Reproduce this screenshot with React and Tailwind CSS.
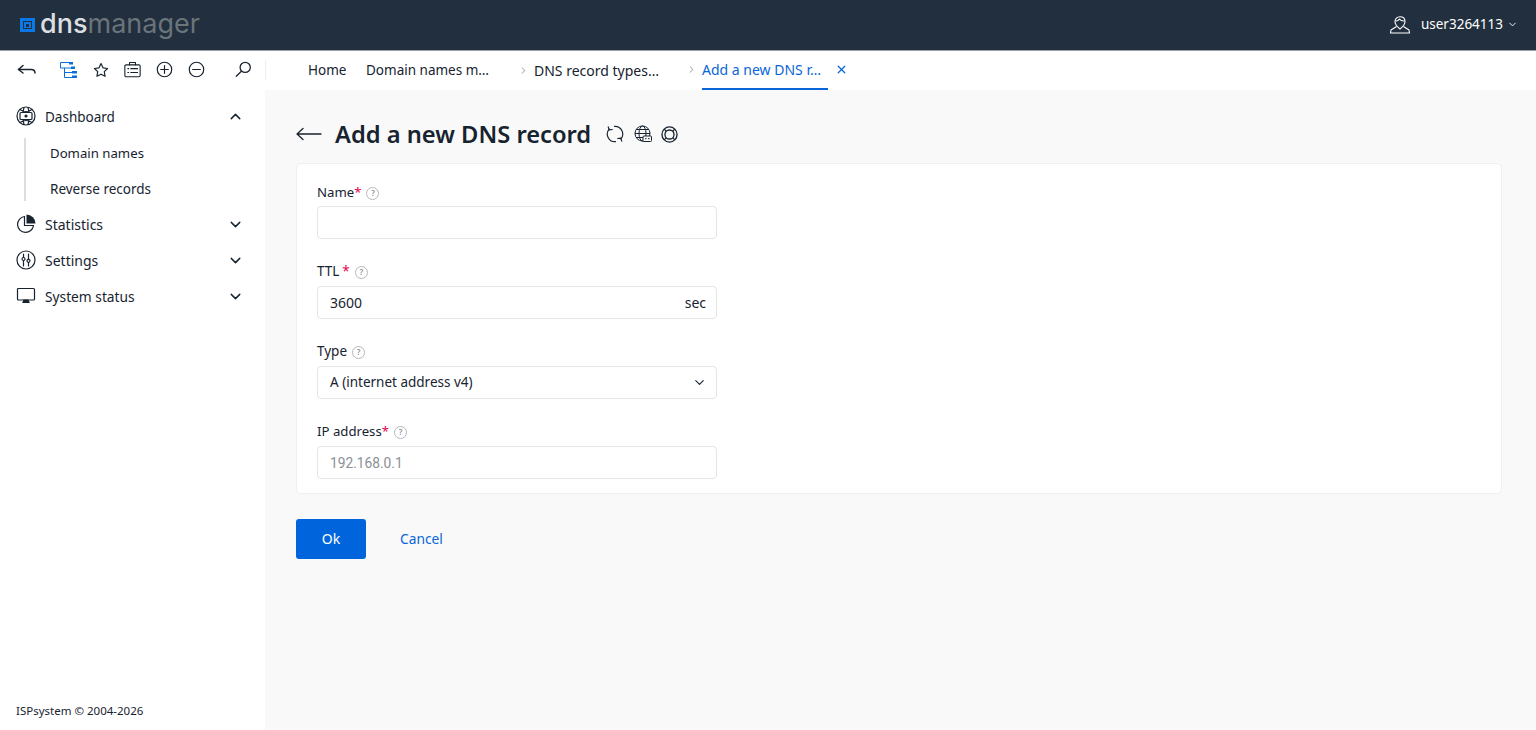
import React from 'react';
import { ChevronDown, ChevronUp, ChevronRight, X } from 'lucide-react';

const FONT = { fontFamily: '"Noto Sans", "Open Sans", sans-serif' };

const Ico = ({ size = 20, children, className = '', sw = 1.3 }) => (
    <svg width={size} height={size} viewBox="0 0 20 20" fill="none" stroke="currentColor" strokeWidth={sw} strokeLinecap="round" strokeLinejoin="round" className={className}>
        {children}
    </svg>
);

// --- toolbar icons ---
const BackIcon = () => (
    <Ico size={20} sw={1.5}><path d="M1.5 9.5h12.500c2.500 0 4 1.200 4 3.500" /><path d="M6 5.500 1.500 9.500 6 13" /></Ico>
);
const TreeIcon = () => (
    <svg width="17" height="16" viewBox="0 0 17 16" fill="none" stroke="#0a6fdc" strokeWidth="1">
        <path d="M.5.500h9M.5.500v5.500h11M4.500 6v9.500h8M4.500 10.500h8" />
        <rect x="9" y="0" width="4" height="2.500" fill="#0a6fdc" stroke="none" />
        <rect x="11" y="4.500" width="4" height="2.500" fill="#0a6fdc" stroke="none" />
        <rect x="12" y="9" width="5" height="2.500" fill="#0a6fdc" stroke="none" />
        <rect x="12" y="13.500" width="5" height="2.500" fill="#0a6fdc" stroke="none" />
    </svg>
);
const StarIcon = () => (
    <Ico size={16} sw={1.500}><path d="m10 2 2.500 5.300 5.700.8-4.100 4 1 5.800L10 15.200l-5.100 2.700 1-5.800-4.100-4 5.700-.8z" /></Ico>
);
const CaseIcon = () => (
    <Ico size={17} sw={1.300}>
        <rect x="1" y="4.500" width="18" height="14" rx="1.500" />
        <path d="M6.500 4.500V1.800h7v2.700M4.500 9h1M8 9h8M4.500 13.500h1M8 13.500h8" />
    </Ico>
);
const PlusCircle = () => (
    <Ico size={17} sw={1.400}><circle cx="10" cy="10" r="8.500" /><path d="M10 5.500v9M5.500 10h9" /></Ico>
);
const MinusCircle = () => (
    <Ico size={17} sw={1.400}><circle cx="10" cy="10" r="8.500" /><path d="M5.500 10h9" /></Ico>
);
const SearchIcon = () => (
    <Ico size={17} sw={1.500}><circle cx="12" cy="7.500" r="6" /><path d="M7.500 12 1.500 18" /></Ico>
);

// --- sidebar icons ---
const DashIcon = () => (
    <Ico size={20} sw={1.200}>
        <circle cx="10" cy="10" r="9" />
        <path d="M4 3.500c2 1.500 3.500 2 6 2s4-.5 6-2M4 16.500c2-1.500 3.500-2 6-2s4 .5 6 2M8 1.500 7 6M12 1.500 13 6M8 18.500l-1-4.500M12 18.500l1-4.500" />
        <rect x="4" y="6.500" width="12" height="7" rx="1" />
        <circle cx="10" cy="10" r="1" fill="currentColor" />
    </Ico>
);
const PieIcon = () => (
    <svg width="20" height="20" viewBox="0 0 20 20" fill="none" stroke="currentColor" strokeWidth="1.200">
        <path d="M8.500 2.500a8 8 0 1 0 9 9h-9z" />
        <path d="M10.500 .5a9 9 0 0 1 9 9h-9z" fill="currentColor" stroke="none" />
    </svg>
);
const SlidersIcon = () => (
    <Ico size={20} sw={1.200}>
        <circle cx="10" cy="10" r="9" />
        <path d="M7.500 4v3.500M7.500 11v5M12.500 4v5M12.500 12.500V16" />
        <circle cx="7.500" cy="9" r="1.500" />
        <circle cx="12.500" cy="10.800" r="1.500" />
    </Ico>
);
const MonitorIcon = () => (
    <svg width="20" height="20" viewBox="0 0 20 20" fill="none" stroke="currentColor" strokeWidth="1.200">
        <rect x="1.500" y="2.500" width="17" height="11.500" rx="1" />
        <path d="M8 14h4l1 2.500H7z" fill="currentColor" />
    </svg>
);

// --- title icons ---
const ArrowLeft = () => (
    <svg width="26" height="14" viewBox="0 0 26 14" fill="none" stroke="#17232f" strokeWidth="1.300" strokeLinecap="round" strokeLinejoin="round">
        <path d="M1 7h24M7 1.500 1 7l6 5.500" />
    </svg>
);
const RefreshIcon = () => (
    <Ico size={18} sw={1.300}>
        <path d="M10.500 18.500A8.500 8.500 0 0 1 3.500 4.500" />
        <path d="M2.500 2l1 3.500L7 5" />
        <path d="M9.500 1.500A8.500 8.500 0 0 1 16.500 15.500" />
        <path d="M17.500 18l-1-3.500L13 15" />
    </Ico>
);
const GlobeIcon = () => (
    <svg width="18" height="18" viewBox="0 0 18 18" fill="none" stroke="#17232f" strokeWidth="1">
        <circle cx="8.500" cy="8.500" r="7.500" />
        <ellipse cx="8.500" cy="8.500" rx="3.500" ry="7.500" />
        <path d="M1 8.500h15M2 4.500h13M2 12.500h13" />
        <rect x="9" y="11" width="8.500" height="5.500" rx="1" fill="#f9f9f9" stroke="#17232f" />
        <path d="M11 13.700h1.500M14 13.700h1.500" stroke="#17232f" />
    </svg>
);
const LifeBuoy = () => (
    <svg width="17" height="17" viewBox="0 0 18 18" fill="none" stroke="#17232f">
        <circle cx="9" cy="9" r="8" strokeWidth="1.400" />
        <circle cx="9" cy="9" r="4.800" strokeWidth="1.400" />
        <path d="M3.500 3.500 5.700 5.700M14.500 3.500 12.300 5.700M3.500 14.500l2.200-2.200M14.500 14.500l-2.200-2.200" strokeWidth="1.300" />
    </svg>
);
const HelpDot = () => (
    <span className="ml-[5px] mt-[1px] inline-flex h-[13px] w-[13px] items-center justify-center rounded-full border border-[#b5b8bb] text-[8px] font-semibold leading-none text-[#8a8f94]">?</span>
);
const UserIcon = () => (
    <svg width="20" height="18" viewBox="0 0 20 18" fill="none" stroke="#fff" strokeWidth="1.100" strokeLinejoin="round">
        <path d="M10 .7c-3 0-5 2-5 4.800 0 2.500 2.500 5.500 5 7.500 2.500-2 5-5 5-7.500C15 2.700 13 .7 10 .7z" />
        <path d="M5.500 5c2 .2 3-.5 4-2 1 1.500 2.500 2.200 5 2" />
        <path d="M6.500 10.500 1 14l-.5 3h19l-.5-3-5.500-3.500" />
    </svg>
);

const Required = () => <span className="text-[#e6004c]">*</span>;

const Field = ({ label, star, labelClass = 'text-[13.5px] pb-[2px]', children }) => (
    <div className="h-[80px]">
        <div className={`flex h-[17px] items-center leading-[15px] text-[#17232f] ${labelClass}`}>
            {label}{star}<HelpDot />
        </div>
        <div className="mt-[5px] flex h-[33px] w-[400px] items-center justify-between rounded-[4px] border border-[#e3e5e7] bg-white pl-3 pr-[10px] text-[14px] text-[#17232f]">
            {children}
        </div>
    </div>
);

const NavItem = ({ icon, label, open, textClass = 'text-[14px]' }) => (
    <div className="flex h-[36px] items-center pl-[16px] pr-[21px] text-[#17232f]">
        <span className="flex w-[20px] justify-center">{icon}</span>
        <span className={`ml-[9px] flex-1 ${textClass}`}>{label}</span>
        {open ? <ChevronUp size={17} strokeWidth={2} /> : <ChevronDown size={17} strokeWidth={2} />}
    </div>
);

const App = () => {
    return (
        <div className="flex h-[730px] w-[1536px] flex-col overflow-hidden bg-[#f9f9f9] text-[#17232f]" style={FONT}>
            {/* barre du haut */}
            <header className="flex h-[51px] shrink-0 items-center justify-between border-b border-b-[#9aa0a6] bg-[#212f3e] pl-[20px] pr-[18px]">
                <div className="flex items-center">
                    <span className="flex h-[14px] w-[15px] items-center justify-center bg-[#0a78e6]">
                        <span className="flex h-[8px] w-[9px] items-center justify-center border border-[#212f3e]">
                            <span className="h-[3px] w-[3px] bg-[#212f3e]" />
                        </span>
                    </span>
                    <span className="ml-[5px] pb-[3px] text-[27px] font-normal leading-none text-[#dcdfe2]" style={{ fontFamily: 'Inter, sans-serif' }}>
                        <span className="font-medium">dns</span><span className="text-[#6b737b]">manager</span>
                    </span>
                </div>
                <div className="flex items-center pb-[1px] text-[13.5px] text-white">
                    <UserIcon />
                    <span className="ml-[11px]">user3264113</span>
                    <ChevronDown size={11} className="ml-[4px]" />
                </div>
            </header>

            {/* barre d'outils + onglets */}
            <div className="flex h-[39px] shrink-0 bg-white">
                <div className="flex w-[266px] items-center pb-[2px] pl-[17px] text-[#17232f]">
                    <BackIcon />
                    <span className="ml-[23px] flex"><TreeIcon /></span>
                    <span className="ml-[16px] flex"><StarIcon /></span>
                    <span className="ml-[15px] flex"><CaseIcon /></span>
                    <span className="ml-[15px] flex"><PlusCircle /></span>
                    <span className="ml-[15px] flex"><MinusCircle /></span>
                    <span className="ml-[30px] flex"><SearchIcon /></span>
                    <span className="ml-[13px] h-[20px] w-px bg-[#eeeeee]" />
                </div>
                <nav className="flex flex-1 pl-[42px] text-[14px]">
                    <div className="flex h-full w-[58px] items-center pb-[1px] text-[13.5px]">Home</div>
                    <div className="flex h-full w-[152px] items-center pb-[1px] text-[13.5px]">Domain names m…</div>
                    <div className="flex h-full w-[168px] items-center pb-[1px]">
                        <ChevronRight size={11} strokeWidth={2.200} className="text-[#a8adb2]" />
                        <span className="ml-[5px]">DNS record types…</span>
                    </div>
                    <div className="flex h-full items-center">
                        <ChevronRight size={11} strokeWidth={2.200} className="mb-[2px] text-[#a8adb2]" />
                        <span className="ml-[5px] flex h-full w-[126px] items-center border-b-2 border-b-[#0a66d8] text-[#0a66d8]">Add a new DNS r…</span>
                        <X size={13} strokeWidth={2.400} className="mb-[2px] ml-[7px] text-[#0a66d8]" />
                    </div>
                </nav>
            </div>

            <div className="flex min-h-0 flex-1">
                {/* menu latéral */}
                <aside className="flex w-[265px] shrink-0 flex-col justify-between bg-white pb-[11px] pt-[8px]">
                    <div>
                        <NavItem icon={<DashIcon />} label="Dashboard" textClass="pt-[2px] text-[13.5px]" open />
                        <div className="relative">
                            <span className="absolute bottom-[5px] left-[24px] top-[4px] w-[2px] bg-[#dddddd]" />
                            <div className="flex h-[36px] items-center pl-[50px] pt-[3px] text-[13.2px]">Domain names</div>
                            <div className="flex h-[36px] items-center pl-[50px] pt-[2px] text-[13.5px]">Reverse records</div>
                        </div>
                        <NavItem icon={<PieIcon />} label="Statistics" />
                        <NavItem icon={<SlidersIcon />} label="Settings" />
                        <NavItem icon={<MonitorIcon />} label="System status" textClass="pt-[2px] text-[13.75px]" />
                    </div>
                    <div className="pl-[16px] text-[11.5px] leading-[16px]">ISPsystem © 2004-2026</div>
                </aside>

                {/* contenu */}
                <main className="flex-1 pl-[31px] pr-[34px] pt-[29px]">
                    <div className="flex h-[30px] items-center">
                        <ArrowLeft />
                        <h1 className="ml-[13px] text-[23.7px] font-semibold leading-[30px] text-[#17232f]">Add a new DNS record</h1>
                        <span className="ml-[15px] flex text-[#17232f]"><RefreshIcon /></span>
                        <span className="ml-[10px] flex"><GlobeIcon /></span>
                        <span className="ml-[9px] flex"><LifeBuoy /></span>
                    </div>
                    <div className="mt-[14px] h-[331px] rounded-[5px] border border-[#f0f0f0] bg-white pl-[20px] pt-[20px]">
                        <Field label="Name" labelClass="text-[13.2px]" star={<Required />} />
                        <Field label="TTL " star={<span className="ml-[3px]"><Required /></span>}>
                            <span>3600</span>
                            <span className="text-[14px]">sec</span>
                        </Field>
                        <Field label="Type">
                            <span className="pb-[1px] text-[13.5px]">A (internet address v4)</span>
                            <ChevronDown size={15} strokeWidth={1.800} className="-mr-[1px]" />
                        </Field>
                        <Field label="IP address" labelClass="pb-[2px] text-[13.2px]" star={<Required />}>
                            <span className="pt-[1px] text-[13.75px] text-[#8a8f94]" style={{ fontFamily: 'Roboto, sans-serif' }}>192.168.0.1</span>
                        </Field>
                    </div>
                    <div className="mt-[25px] flex items-center">
                        <button className="h-[40px] w-[70px] rounded-[3px] bg-[#0064dc] pb-[1px] text-[14px] text-white">Ok</button>
                        <a className="ml-[34px] text-[13.75px] text-[#0a66d8]">Cancel</a>
                    </div>
                </main>
            </div>
        </div>
    );
};

export default App;
